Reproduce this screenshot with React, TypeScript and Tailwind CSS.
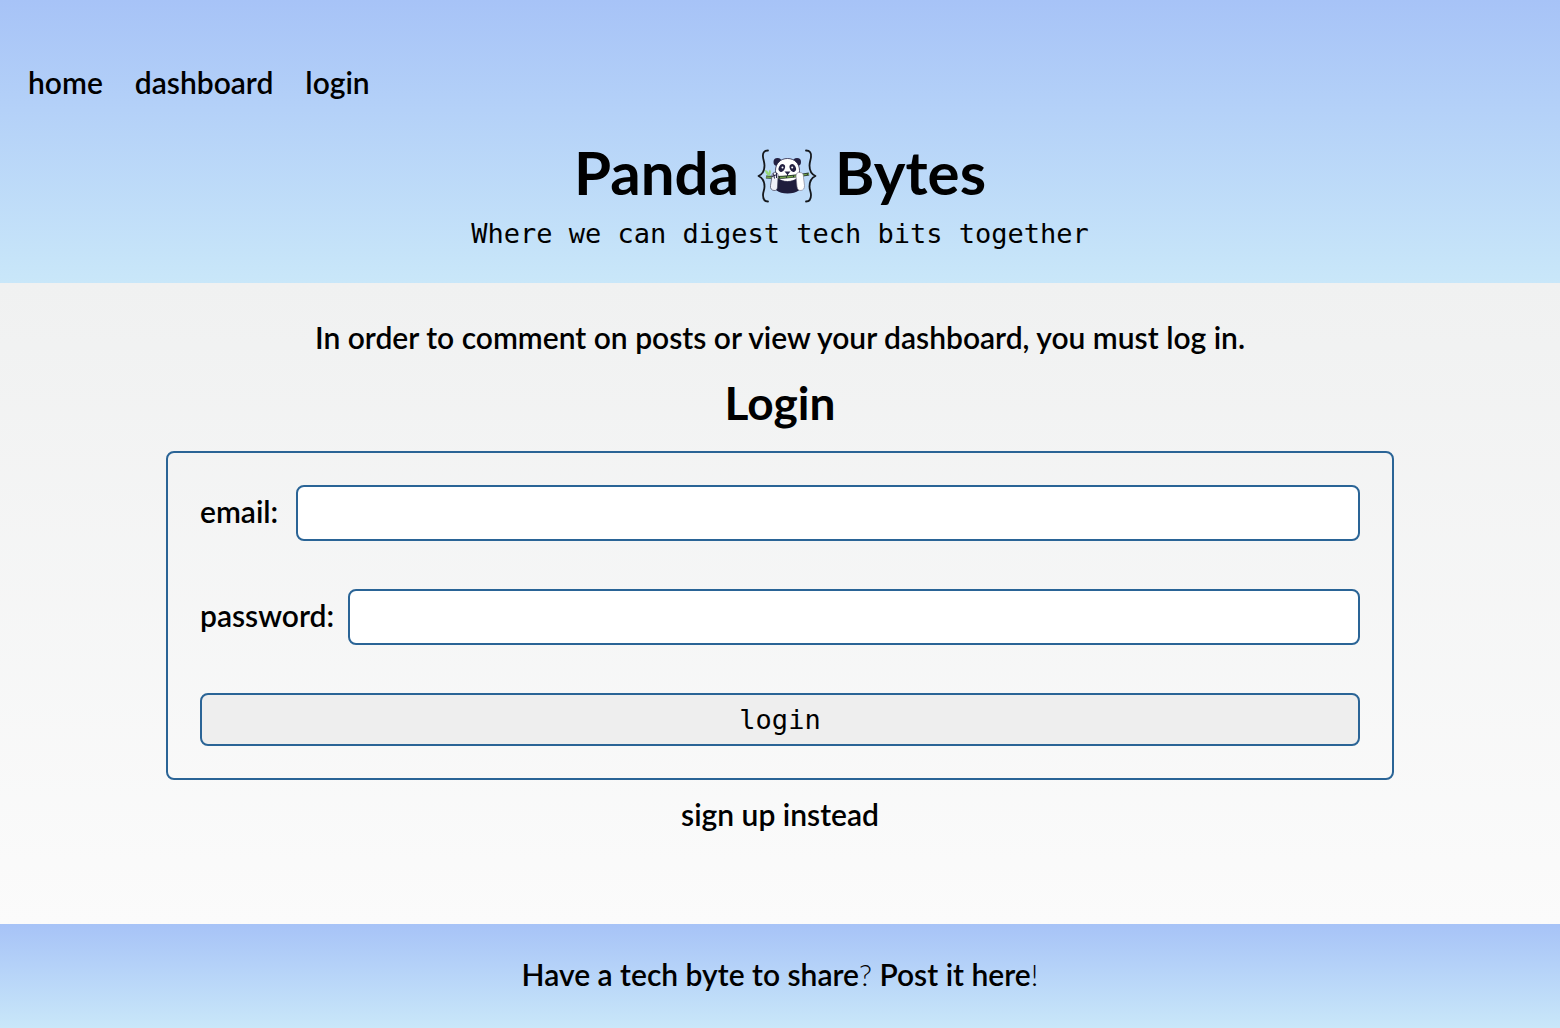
import type { ReactNode } from "react";

function NavLink({ href, children }: { href: string; children: ReactNode }) {
  return (
    <a href={href} className="whitespace-nowrap">
      {children}
    </a>
  );
}

function PandaLogo() {
  return (
    <svg viewBox="0 0 64 64" className="size-16 shrink-0" role="img" aria-label="Panda eating bamboo between curly braces">
      <g fill="none" stroke="#15181c" strokeWidth="1.8" strokeLinecap="round" strokeLinejoin="round">
        <path d="M13 6.500C9 6.500 7.500 9 8 13c.3 3 1.500 5 1.500 8.500 0 5.500-1.500 8.500-6 10.500 4.500 2 6 5 6 10.500 0 3.500-1.500 5.500-1.500 8.500 0 4 1.500 6.500 5 6.500" />
        <path d="M51 6.500c4 0 5.500 2.500 5 6.500-.3 3-1.500 5-1.500 8.500 0 5.500 1.500 8.500 6 10.500-4.500 2-6 5-6 10.500 0 3.500 1.500 5.500 1.500 8.500 0 4-1.500 6.500-5 6.500" />
      </g>
      <path d="M20 32h25l3 6c0 7-6 11.500-15.500 11.500S18 45 17 38z" fill="#1f1d3c" />
      <circle cx="22.500" cy="18" r="4" fill="#242142" />
      <circle cx="42" cy="18" r="4" fill="#242142" />
      <path d="M32.500 14.500c7 0 12 5 12 12 0 7-4 11-12 11s-12-4-12-11c0-7 5-12 12-12z" fill="#fff" stroke="#242142" strokeWidth="0.8" />
      <ellipse cx="26.800" cy="24" rx="3" ry="4" transform="rotate(25 26.800 24)" fill="#242142" />
      <ellipse cx="37.800" cy="24" rx="3" ry="4" transform="rotate(-25 37.800 24)" fill="#242142" />
      <circle cx="27.500" cy="23.500" r="1" fill="#fff" />
      <circle cx="37.200" cy="23.500" r="1" fill="#fff" />
      <path d="M29.500 27.500h6l-3 3.500z" fill="#242142" />
      <path d="M32.500 30v3" stroke="#242142" strokeWidth="1" />
      <path d="M21.500 35.500c6 2 16 2 22 0v3c-6-2-16-2-22 0z" fill="#1f1d3c" />
      <path d="M11 33c14 1.500 29-.5 43-3" fill="none" stroke="#29382f" strokeWidth="3" />
      <path d="M11 33c14 1.500 29-.5 43-3" fill="none" stroke="#75a64b" strokeWidth="1.500" strokeDasharray="6 1" />
      <path d="M14 32c-3-1.500-4-4-4-6 2.500.5 3.500 2 4 4-.5-2 0-3.500 1-4.500 1.500 2.500 1 4.500-1 6.500z" fill="#94d875" />
      <path d="M17 32c0-3 2-4 3.500-3.500 2.500 0 3 3 2.500 5.500l-.5 9c0 2-1.500 4-3.500 3.500-2.500-.3-4-2-3.500-5z" fill="#eff0f8" stroke="#45435c" strokeWidth="0.700" />
      <path d="M41 32c0-3 2-4 4-3.500 3 0 3.500 2 3.500 5l1 8c0 3-1 4.500-3.500 5-2.500 0-3.500-1-4-4z" fill="#fff" stroke="#777487" strokeWidth="0.600" />
      <path d="M17 32.500l5-2M18.500 29.500l1 5M21.500 29v5" fill="none" stroke="#242142" strokeWidth="1" />
    </svg>
  );
}

function Field({ id, label, type, labelClass }: { id: string; label: string; type: string; labelClass: string }) {
  return (
    <div className="flex items-center gap-4">
      <label htmlFor={id} className={`shrink-0 pb-1 whitespace-nowrap ${labelClass}`}>
        {label}
      </label>
      <input id={id} name={id} type={type} className="h-14 min-w-0 flex-1 rounded-lg border-2 border-[#2a6496] bg-white px-3" />
    </div>
  );
}

export default function App() {
  return (
    <div className="flex min-h-screen flex-col font-['Lato',sans-serif] text-[30px] leading-10 font-semibold text-black">
      <header className="bg-linear-to-b from-[#a7c3f7] to-[#c9e7f9] pt-[62px] pb-[29px]">
        <nav aria-label="Main" className="flex gap-8 px-7">
          <NavLink href="#home">home</NavLink>
          <NavLink href="#dashboard">dashboard</NavLink>
          <NavLink href="#login">login</NavLink>
        </nav>
        <h1 className="mt-[34px] flex h-20 items-center justify-center gap-4 text-[60px] leading-none font-bold">
          <span className="pb-2">Panda</span>
          <PandaLogo />
          <span className="pb-2">Bytes</span>
        </h1>
        <p className="-mt-0.5 text-center font-['DejaVu_Sans_Mono',monospace] text-[27px] font-normal">
          Where we can digest tech bits together
        </p>
      </header>

      <main className="flex flex-1 flex-col bg-linear-to-b from-[#f0f1f1] to-[#fbfbfb] px-[166px] pt-[34px] pb-20 text-center">
        <p>In order to comment on posts or view your dashboard, you must log in.</p>
        <h2 className="mt-4 mb-[18px] text-[46px] leading-[60px] font-bold">Login</h2>
        <form className="flex flex-col gap-12 rounded-lg border-2 border-[#2a6496] p-8 text-left">
          <Field id="email" label="email:" type="email" labelClass="w-20" />
          <Field id="password" label="password:" type="password" labelClass="w-[132px]" />
          <button
            type="button"
            className="h-[53px] rounded-lg border-2 border-[#2a6496] bg-[#eeeeee] font-['DejaVu_Sans_Mono',monospace] text-[27px] font-normal"
          >
            login
          </button>
        </form>
        <a href="#signup" className="mt-[14px] self-center">
          sign up instead
        </a>
      </main>

      <footer className="bg-linear-to-b from-[#a7c3f7] to-[#c9e7f9] pt-[30px] pb-[34px] text-center">
        <a href="#post">Have a tech byte to share<span className="font-light">?</span> Post it here<span className="font-light">!</span></a>
      </footer>
    </div>
  );
}
